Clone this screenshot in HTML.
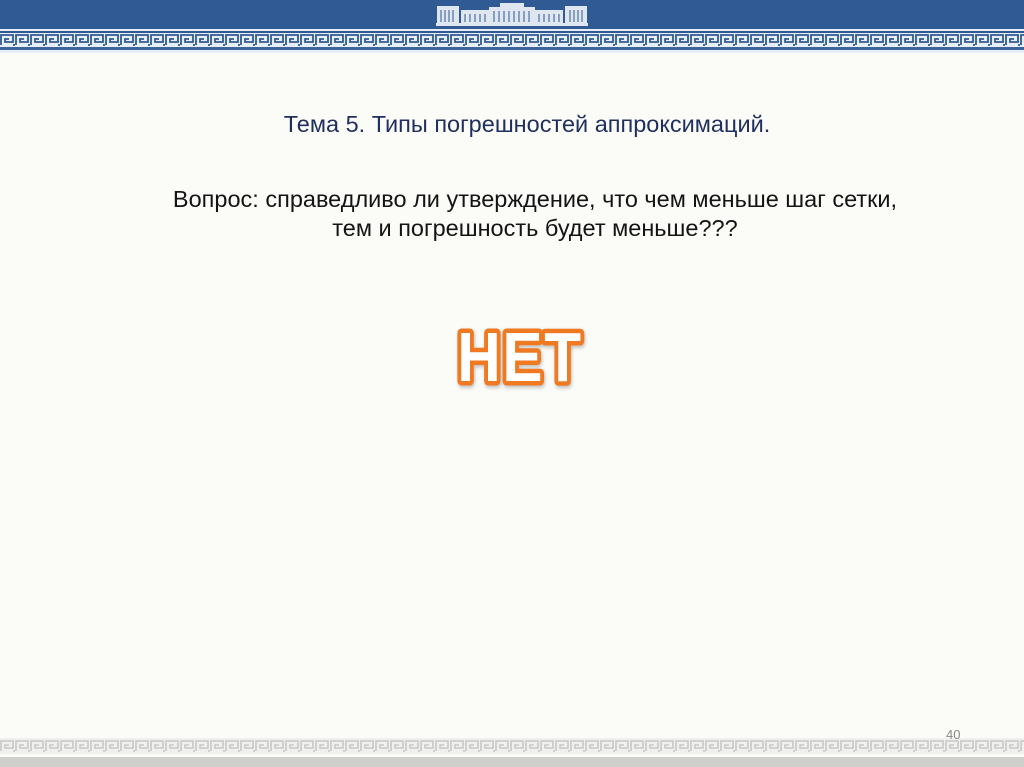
<!DOCTYPE html>
<html><head><meta charset="utf-8"><style>
body{margin:0;width:1024px;height:767px;background:#fbfbf8;position:relative;overflow:hidden;font-family:"Liberation Sans","DejaVu Sans",sans-serif}
.t{position:absolute;left:0;width:1024px;text-align:center;color:#1f2f5e}
</style></head><body>
<svg width="1024" height="767" style="position:absolute;left:0;top:0">
<defs>
<pattern id="m" x="0" y="34" width="15" height="12" patternUnits="userSpaceOnUse">
<path d="M1 11 V1 H13 V8 H5 V5 H9" fill="none" stroke="#2f5a94" stroke-width="1.8"/>
<path d="M13 11 H16" stroke="#2f5a94" stroke-width="1.8"/>
</pattern>
<pattern id="g" x="0" y="740" width="15" height="12" patternUnits="userSpaceOnUse">
<path d="M1 11 V1 H13 V8 H5 V5 H9" fill="none" stroke="#c8c8c5" stroke-width="1.6"/>
<path d="M13 11 H16" stroke="#c8c8c5" stroke-width="1.6"/>
</pattern>
</defs>
<rect x="0" y="0" width="1024" height="29" fill="#2f5a94"/>
<rect x="0" y="29" width="1024" height="24" fill="#e8eef5"/>
<rect x="0" y="31" width="1024" height="2" fill="#2f5a94"/>
<rect x="0" y="34" width="1024" height="12" fill="url(#m)"/>
<rect x="0" y="47" width="1024" height="3" fill="#3d659c"/>
<g fill="#dfe6ef">
<rect x="437" y="6" width="22" height="19"/>
<rect x="461" y="10" width="28" height="14"/>
<rect x="489" y="7" width="46" height="18"/>
<rect x="500" y="3" width="24" height="5"/>
<rect x="535" y="10" width="28" height="14"/>
<rect x="565" y="6" width="22" height="19"/>
<rect x="436" y="23" width="152" height="3"/>
</g>
<g stroke="#2f5a94" stroke-width="1">
<path d="M441 10v12M445 10v12M449 10v12M453 10v12M465 14v8M470 14v8M475 14v8M480 14v8M485 14v8M494 11v11M499 11v11M504 11v11M509 11v11M514 11v11M519 11v11M524 11v11M529 11v11M539 14v8M544 14v8M549 14v8M554 14v8M559 14v8M570 10v12M574 10v12M578 10v12M582 10v12"/>
</g>
<rect x="0" y="738" width="1024" height="16" fill="#f0f0ee"/>
<rect x="0" y="740" width="1024" height="12" fill="url(#g)"/>
<rect x="0" y="757" width="1024" height="10" fill="#cfcfcc"/>
<g transform="translate(520,381) scale(0.86,1)">
<text x="0" y="0" text-anchor="middle" font-family="Liberation Sans, sans-serif" font-weight="bold" font-size="70" letter-spacing="2" fill="#fff" stroke="#f07a22" stroke-width="9" stroke-linejoin="round" paint-order="stroke" style="filter:drop-shadow(1px 2px 2px rgba(0,0,0,.25))">НЕТ</text>
</g>
</svg>
<div class="t" style="top:111px;left:15px;font-size:23.5px">Тема 5. Типы погрешностей аппроксимаций.</div>
<div class="t" style="top:185px;left:23px;font-size:23.5px;line-height:29px;color:#141414">Вопрос: справедливо ли утверждение, что чем меньше шаг сетки,<br>тем и погрешность будет меньше???</div>
<div style="position:absolute;left:946px;top:727px;font-size:13px;color:#888">40</div>
</body></html>
